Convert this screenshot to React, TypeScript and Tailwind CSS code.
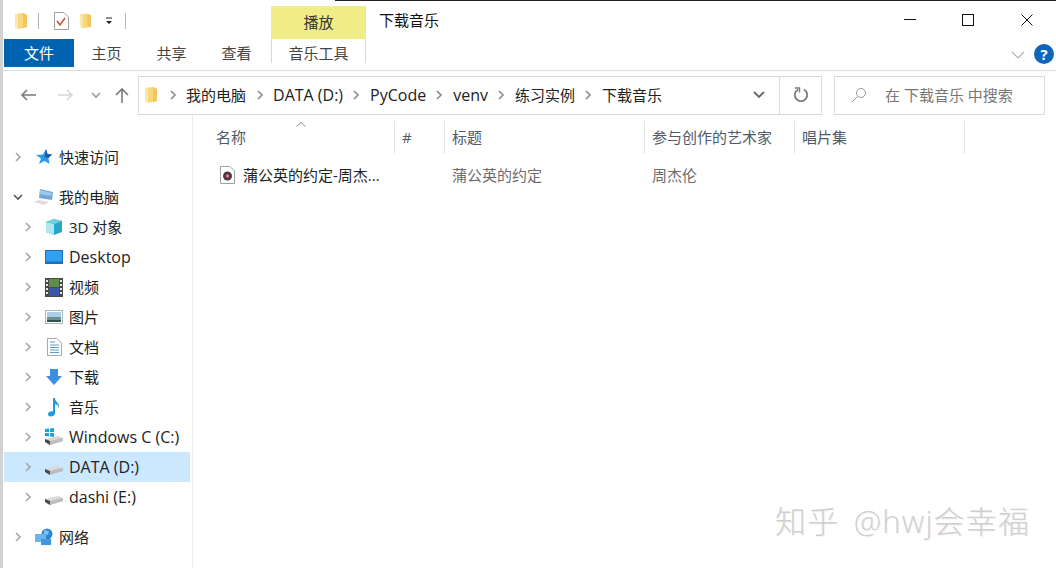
const Folder = ({ className = "" }: { className?: string }) => (
    <svg viewBox="0 0 14 18" className={className}>
        <path d="M1 2 L9 1 L13 3 L13 15 L4 17 L1 15 Z" fill="#f9d87c" />
        <path d="M9 1 L13 3 L13 15 L9 16 Z" fill="#f3c55a" />
        <path d="M1 2 L4 3 L4 17 L1 15 Z" fill="#fce9b0" />
    </svg>
);

const Chevron = ({ open = false, color = "#a6a6a6" }: { open?: boolean; color?: string }) => (
    <svg viewBox="0 0 10 10" className="w-[10px] h-[10px]">
        <path d={open ? "M1 3 L5 7 L9 3" : "M3 1 L7 5 L3 9"} fill="none" stroke={color} strokeWidth="1.6" />
    </svg>
);

const Star = () => (
    <svg viewBox="0 0 18 18" className="w-[18px] h-[18px]">
        <path d="M11 1 L12.5 6 L17 6.5 L13.5 10 L14.5 16 L9.5 13 L4 16 L6 10.5 L1 7 L8 6.5 Z" fill="#2f9be8" />
        <path d="M11 1 L12.5 6 L17 6.5 L13.5 10 L9.5 9 Z" fill="#1d5f9e" />
    </svg>
);

const Pc = () => (
    <svg viewBox="0 0 22 18" className="w-[22px] h-[18px]">
        <path d="M7 1 L20 4 L19 12 L6 10 Z" fill="#6fa9dc" />
        <path d="M7 2 L19 5 L18 8 L6.5 6 Z" fill="#9cc8ec" />
        <path d="M1 14 L6 12 L16 14 L11 17 Z" fill="#e3d9e0" />
    </svg>
);

const Cube = () => (
    <svg viewBox="0 0 18 18" className="w-[18px] h-[18px]">
        <path d="M9 1 L17 3 L17 14 L9 17 L1 14 L1 4 Z" fill="#29a7c9" />
        <path d="M1 4 L9 6 L9 17 L1 14 Z" fill="#b2e6ee" />
        <path d="M1 4 L9 1 L17 3 L9 6 Z" fill="#6fd0e2" />
    </svg>
);

const Desktop = () => (
    <svg viewBox="0 0 18 14" className="w-[18px] h-[14px]">
        <rect x="0" y="0" width="18" height="14" fill="#1c6fb8" />
        <rect x="1" y="1" width="16" height="10.5" fill="#2fa0f2" />
    </svg>
);

const Film = () => (
    <svg viewBox="0 0 18 19" className="w-[18px] h-[19px]">
        <rect width="18" height="19" fill="#4a4a4a" />
        <rect x="4" y="1" width="10" height="8" fill="#5b8f4a" />
        <rect x="4" y="10" width="10" height="8" fill="#3a57a8" />
        <path d="M1 2h2v2H1zM1 6h2v2H1zM1 10h2v2H1zM1 14h2v2H1zM15 2h2v2h-2zM15 6h2v2h-2zM15 10h2v2h-2zM15 14h2v2h-2z" fill="#e6e6e6" />
    </svg>
);

const Picture = () => (
    <svg viewBox="0 0 18 14" className="w-[18px] h-[14px]">
        <rect x="0.5" y="0.5" width="17" height="13" fill="#fff" stroke="#a9b3ba" />
        <rect x="2" y="2" width="14" height="5" fill="#a8d0ea" />
        <rect x="2" y="7" width="14" height="3" fill="#6f8f8a" />
        <rect x="2" y="10" width="14" height="2" fill="#33524f" />
    </svg>
);

const Doc = () => (
    <svg viewBox="0 0 15 18" className="w-[15px] h-[18px]">
        <path d="M0.5 0.5 H10 L14.5 5 V17.5 H0.5 Z" fill="#fff" stroke="#a8a8a8" />
        <path d="M3 4h5M3 7h9M3 9.5h9M3 12h9M3 14.5h9" stroke="#5d9cc9" strokeWidth="1" />
    </svg>
);

const Down = () => (
    <svg viewBox="0 0 18 18" className="w-[18px] h-[18px]">
        <path d="M5 1 H13 V8 H17 L9 17 L1 8 H5 Z" fill="#3b8fe0" />
    </svg>
);

const Note = () => (
    <svg viewBox="0 0 14 20" className="w-[14px] h-[20px]">
        <path d="M6 1 H8 C8 5 13 6 12 11 C11 8 9.5 7.5 8 7 V16 C8 18.5 5.5 19.5 3.5 19.5 C1.5 19.5 1 18 1 17 C1 15 4 13.5 6 14.5 Z" fill="#1f9be0" />
    </svg>
);

const Disk = ({ windows = false }: { windows?: boolean }) => (
    <svg viewBox="0 0 20 18" className="w-[20px] h-[18px]">
        <path d="M1 11 L14 8 L19 10 L19 13 L6 17 L1 14 Z" fill="#d8d8d8" />
        <path d="M1 11 L6 13 L6 17 L1 14 Z" fill="#4a4a4a" />
        <path d="M6 13 L19 10 L19 13 L6 17 Z" fill="#bdbdbd" />
        {windows && <path d="M1 1 L5 0.5 V4 H1 Z M6 0.5 L10 0 V4 H6 Z M1 5 H5 V8.5 L1 8 Z M6 5 H10 V9 L6 8.5 Z" fill="#17a3dc" />}
    </svg>
);

const Net = () => (
    <svg viewBox="0 0 20 18" className="w-[20px] h-[18px]">
        <circle cx="13" cy="6" r="5.5" fill="#2f86d6" />
        <path d="M10 2 L15 3 L14 7 L10 6 Z" fill="#7cc4f2" />
        <rect x="1" y="6" width="11" height="8" fill="#69b7ea" />
        <rect x="7" y="11" width="10" height="6" fill="#3f97de" />
    </svg>
);

const FileIcon = () => (
    <svg viewBox="0 0 15 18" className="w-[15px] h-[18px]">
        <path d="M0.5 0.5 H10 L14.5 5 V17.5 H0.5 Z" fill="#fff" stroke="#a0a0a0" />
        <circle cx="7.5" cy="10" r="4.5" fill="#4a3a42" />
        <circle cx="7.5" cy="10" r="2" fill="#c2455a" />
        <circle cx="7.5" cy="10" r="0.8" fill="#fff" />
    </svg>
);

const TreeRow = ({
    icon,
    label,
    sub = false,
    open = false,
    active = false,
    latin = false,
}: {
    icon: React.ReactNode;
    label: string;
    sub?: boolean;
    open?: boolean;
    active?: boolean;
    latin?: boolean;
}) => (
    <div className={`h-[30px] flex items-center text-[#222] ${latin ? "text-[16px]" : "text-[15px]"} ${active ? "bg-[#cce8ff]" : ""}`}>
        <span className={`flex justify-center shrink-0 ${sub ? "ml-[19px]" : "ml-[9px]"} w-[10px]`}>
            <Chevron open={open} color={open ? "#555555" : "#a6a6a6"} />
        </span>
        <span className="flex justify-center items-center shrink-0 w-[22px] ml-[10px]">{icon}</span>
        <span className="whitespace-nowrap ml-[4px]">{label}</span>
    </div>
);

const App = () => {
    const font = { fontFamily: '"Open Sans", "Noto Sans CJK SC", sans-serif' };
    return (
        <div style={font} className="relative w-[1056px] h-[568px] overflow-hidden bg-white flex flex-col border-l-[3px] border-[#d2d2d2]">
            <div className="absolute left-[332px] right-0 top-0 h-[1px] bg-[#222]" />

            {/* title bar */}
            <div className="h-[39px] flex shrink-0">
                <div className="w-[268px] flex items-center pt-[3px]">
                    <Folder className="ml-[11px] w-[14px] h-[18px]" />
                    <span className="ml-[10px] w-[1px] h-[16px] bg-[#b5b5b5]" />
                    <svg viewBox="0 0 15 18" className="ml-[15px] w-[15px] h-[18px]">
                        <path d="M0.5 0.5 H10 L14.5 5 V17.5 H0.5 Z" fill="#fff" stroke="#a0a0a0" />
                        <path d="M3 9 L6 13 L11 6" fill="none" stroke="#d1502f" strokeWidth="1.5" />
                    </svg>
                    <Folder className="ml-[10px] w-[13px] h-[18px]" />
                    <svg viewBox="0 0 8 8" className="ml-[13px] w-[8px] h-[8px]">
                        <path d="M1 1h6" stroke="#222" />
                        <path d="M1 4 H7 L4 7 Z" fill="#222" />
                    </svg>
                    <span className="ml-[12px] w-[1px] h-[16px] bg-[#b5b5b5]" />
                </div>
                <div className="mt-[6px] w-[95px] bg-[#f0ec86] flex items-center justify-center text-[15px] text-[#333]">播放</div>
                <div className="ml-[13px] pt-[10px] text-[15px] leading-[20px] text-[#111]">下载音乐</div>
                <div className="ml-auto flex">
                    <div className="mr-[46px] mt-[19px] w-[12px] h-[1px] bg-[#111]" />
                    <div className="mr-[47px] mt-[14px] w-[12px] h-[12px] border border-[#111]" />
                    <svg viewBox="0 0 12 12" className="mr-[23px] mt-[14px] w-[12px] h-[12px]">
                        <path d="M0.5 0.5 L11.5 11.5 M11.5 0.5 L0.5 11.5" stroke="#111" strokeWidth="1" />
                    </svg>
                </div>
            </div>

            {/* ribbon tabs */}
            <div className="h-[32px] flex shrink-0 border-b border-[#dcdcdc] text-[15px] text-[#444]">
                <div className="ml-[1px] w-[70px] h-[28px] bg-[#0063b1] text-white flex items-center justify-center">文件</div>
                <div className="w-[65px] h-[28px] flex items-center justify-center">主页</div>
                <div className="w-[65px] h-[28px] flex items-center justify-center">共享</div>
                <div className="w-[65px] h-[28px] flex items-center justify-center">查看</div>
                <div className="ml-[2px] w-[95px] h-[24px] pt-[4px] border-x border-[#d8d8d8] flex items-center justify-center">音乐工具</div>
                <div className="ml-auto flex items-start">
                    <svg viewBox="0 0 14 8" className="mt-[12px] w-[14px] h-[8px]">
                        <path d="M1 1 L7 7 L13 1" fill="none" stroke="#b0b0b0" strokeWidth="1.2" />
                    </svg>
                    <span className="ml-[9px] mr-[2px] mt-[5px] w-[20px] h-[20px] rounded-full bg-[#0f65b8] text-white text-[15px] font-bold flex items-center justify-center">?</span>
                </div>
            </div>

            {/* address bar */}
            <div className="h-[40px] mt-[4px] flex items-center shrink-0">
                <svg viewBox="0 0 16 14" className="ml-[17px] w-[16px] h-[14px]">
                    <path d="M16 7 H2 M7 2 L2 7 L7 12" fill="none" stroke="#7a7a7a" strokeWidth="1.6" />
                </svg>
                <svg viewBox="0 0 16 14" className="ml-[22px] w-[16px] h-[14px]">
                    <path d="M0 7 H14 M9 2 L14 7 L9 12" fill="none" stroke="#d6d6d6" strokeWidth="1.6" />
                </svg>
                <span className="ml-[17px]"><Chevron open color="#9a9a9a" /></span>
                <svg viewBox="0 0 14 16" className="ml-[14px] w-[14px] h-[16px]">
                    <path d="M7 16 V2 M1 8 L7 2 L13 8" fill="none" stroke="#7a7a7a" strokeWidth="1.6" />
                </svg>
                <div className="ml-[9px] w-[684px] h-[39px] border border-[#d9d9d9] flex items-center text-[15px] text-[#222]">
                    <Folder className="ml-[5px] w-[14px] h-[18px]" />
                    <span className="ml-[10px]"><Chevron color="#8a8a8a" /></span>
                    <span className="ml-[8px]">我的电脑</span>
                    <span className="ml-[9px]"><Chevron color="#8a8a8a" /></span>
                    <span className="ml-[8px] text-[16px]">DATA (D:)</span>
                    <span className="ml-[8px]"><Chevron color="#8a8a8a" /></span>
                    <span className="ml-[9px] text-[16px]">PyCode</span>
                    <span className="ml-[8px]"><Chevron color="#8a8a8a" /></span>
                    <span className="ml-[9px] text-[16px]">venv</span>
                    <span className="ml-[8px]"><Chevron color="#8a8a8a" /></span>
                    <span className="ml-[9px]">练习实例</span>
                    <span className="ml-[8px]"><Chevron color="#8a8a8a" /></span>
                    <span className="ml-[9px]">下载音乐</span>
                    <span className="ml-auto mr-[14px] flex">
                        <svg viewBox="0 0 12 8" className="w-[12px] h-[8px]">
                            <path d="M1 1 L6 6 L11 1" fill="none" stroke="#666" strokeWidth="1.8" />
                        </svg>
                    </span>
                    <span className="w-[42px] h-full border-l border-[#d9d9d9] flex items-center justify-center">
                        <svg viewBox="0 0 16 16" className="w-[16px] h-[16px]">
                            <path d="M5 2.5 A6.2 6.2 0 1 0 11 2.5" fill="none" stroke="#7d7d7d" strokeWidth="1.8" />
                            <path d="M2 1 H6.5 V5.5" fill="none" stroke="#7d7d7d" strokeWidth="1.5" />
                        </svg>
                    </span>
                </div>
                <div className="ml-[12px] w-[211px] h-[39px] border border-[#d9d9d9] flex items-center text-[15px] text-[#777]">
                    <svg viewBox="0 0 16 16" className="ml-[16px] w-[16px] h-[16px]">
                        <circle cx="10" cy="6" r="4.5" fill="none" stroke="#999" />
                        <path d="M6.5 9.5 L1 15" stroke="#999" />
                    </svg>
                    <span className="ml-[18px] whitespace-nowrap">在 下载音乐 中搜索</span>
                </div>
            </div>

            {/* body */}
            <div className="flex-1 flex min-h-0">
                <div className="w-[186px] ml-[1px] pt-[27px] shrink-0">
                    <TreeRow icon={<Star />} label="快速访问" />
                    <div className="mt-[10px]">
                        <TreeRow icon={<Pc />} label="我的电脑" open />
                        <TreeRow icon={<Cube />} label="3D 对象" sub />
                        <TreeRow icon={<Desktop />} label="Desktop" sub latin />
                        <TreeRow icon={<Film />} label="视频" sub />
                        <TreeRow icon={<Picture />} label="图片" sub />
                        <TreeRow icon={<Doc />} label="文档" sub />
                        <TreeRow icon={<Down />} label="下载" sub />
                        <TreeRow icon={<Note />} label="音乐" sub />
                        <TreeRow icon={<Disk windows />} label="Windows C (C:)" sub latin />
                        <TreeRow icon={<Disk />} label="DATA (D:)" sub active latin />
                        <TreeRow icon={<Disk />} label="dashi (E:)" sub latin />
                    </div>
                    <div className="mt-[10px]">
                        <TreeRow icon={<Net />} label="网络" />
                    </div>
                </div>

                <div className="ml-[2px] flex-1 border-l border-[#ececec] text-[15px]">
                    <div className="grid grid-cols-[202px_50px_200px_150px_170px] h-[33px] mt-[6px] text-[#4f5a68]">
                        <div className="relative pl-[23px] flex items-center border-r border-[#e5e5e5]">
                            名称
                            <svg viewBox="0 0 10 5" className="absolute left-[103px] top-[1px] w-[10px] h-[5px]">
                                <path d="M0.5 4.5 L5 0.5 L9.5 4.5" fill="none" stroke="#8f8f8f" />
                            </svg>
                        </div>
                        <div className="pl-[7px] flex items-center border-r border-[#e5e5e5]">#</div>
                        <div className="pl-[7px] flex items-center border-r border-[#e5e5e5]">标题</div>
                        <div className="pl-[7px] flex items-center border-r border-[#e5e5e5]">参与创作的艺术家</div>
                        <div className="pl-[7px] flex items-center border-r border-[#e5e5e5]">唱片集</div>
                    </div>
                    <div className="grid grid-cols-[202px_50px_200px_150px_170px] h-[30px] mt-[6px] items-center text-[#6d6d6d]">
                        <div className="pl-[27px] flex items-center text-[#222]">
                            <FileIcon />
                            <span className="ml-[8px] whitespace-nowrap">蒲公英的约定-周杰...</span>
                        </div>
                        <div />
                        <div className="pl-[7px]">蒲公英的约定</div>
                        <div className="pl-[7px]">周杰伦</div>
                        <div />
                    </div>
                </div>
            </div>

            {/* watermark */}
            <div className="absolute left-[772px] top-[498px] text-[31px] leading-[46px] tracking-[1.2px] [word-spacing:5px] font-light text-[#cfcfcf] whitespace-nowrap [text-shadow:1px_1px_0_#f4f4f4]">
                知乎 @hwj会幸福
            </div>
        </div>
    );
};

export default App;
